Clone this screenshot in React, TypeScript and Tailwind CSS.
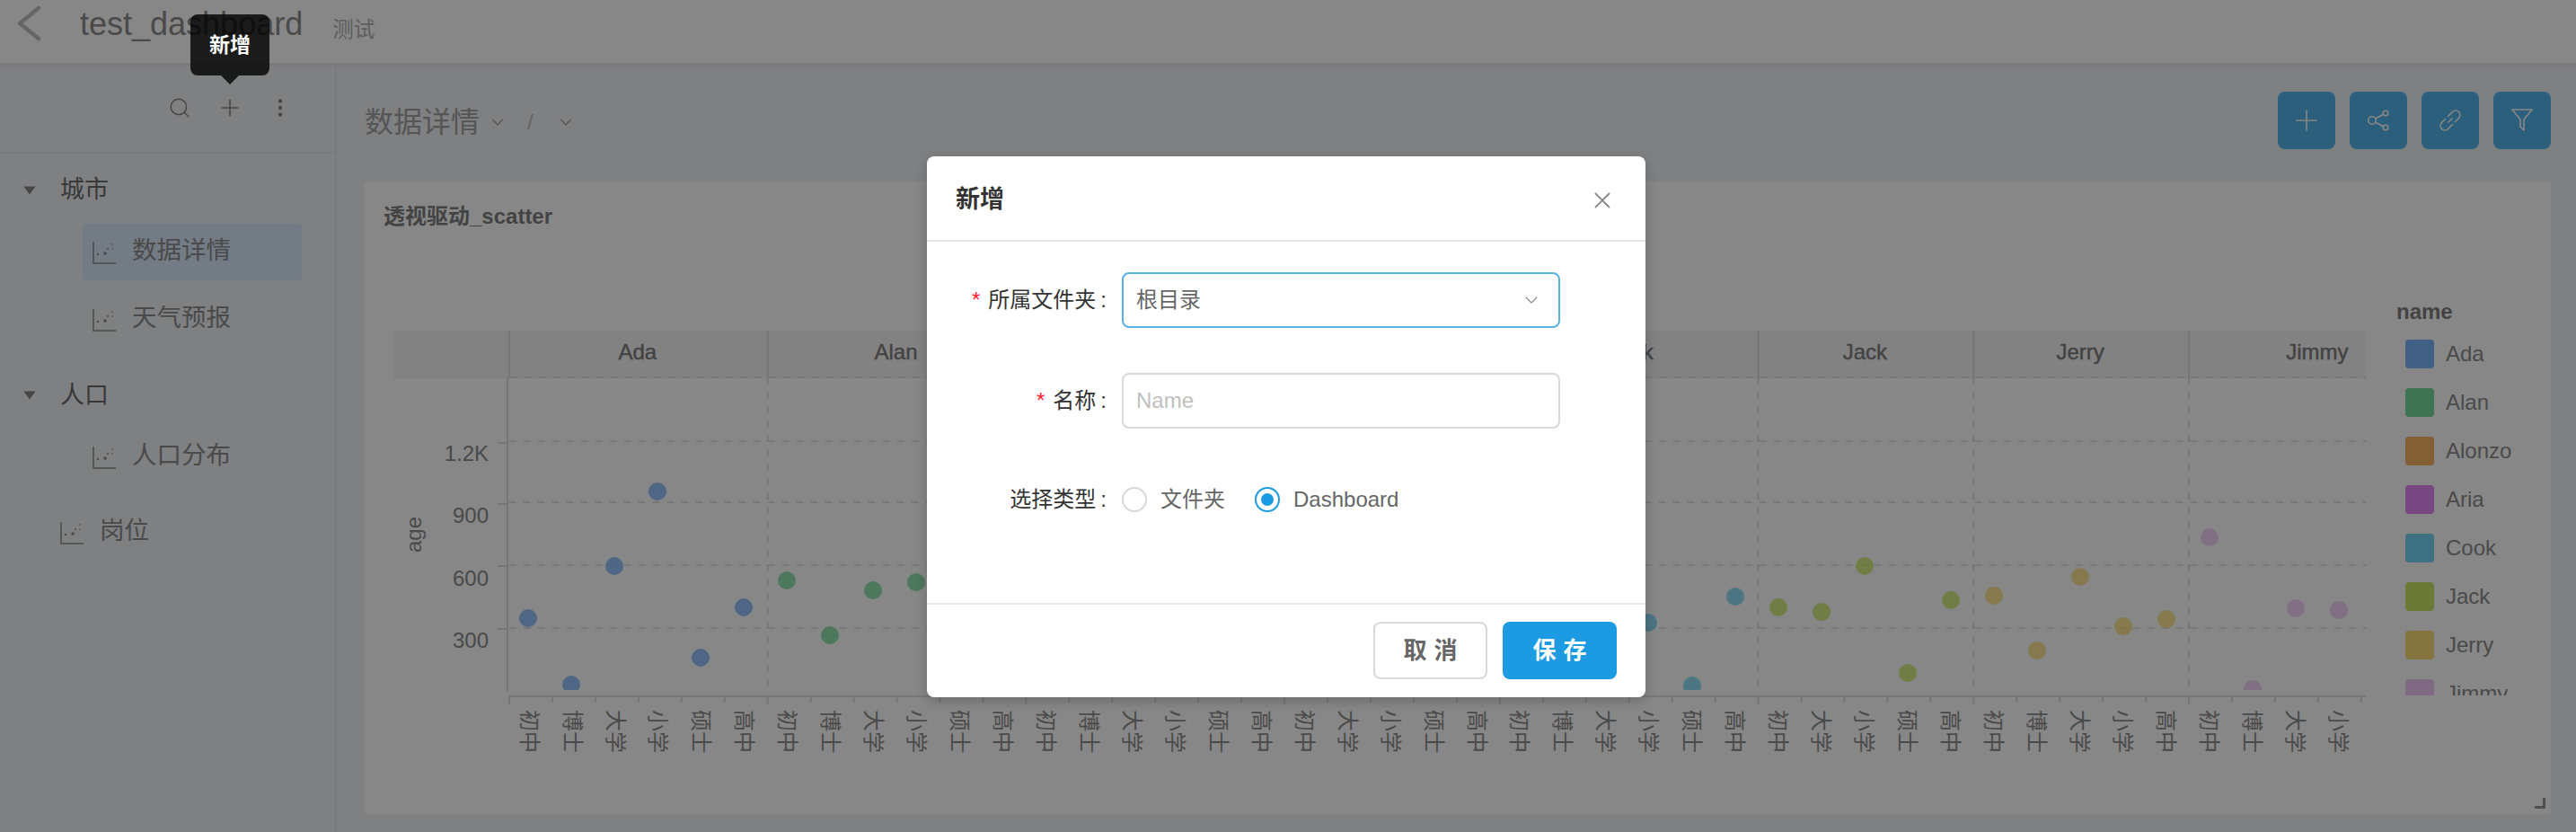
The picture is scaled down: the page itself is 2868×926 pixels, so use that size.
import { ChevronDown, MoreVertical, Plus, Search, X } from "lucide-react";

const facets = [
  { name: "Ada", color: "#5098f5", cats: ["初中", "博士", "大学", "小学", "硕士", "高中"] },
  { name: "Alan", color: "#4bd07a", cats: ["初中", "博士", "大学", "小学", "硕士", "高中"] },
  { name: "Alonzo", color: "#f89c30", cats: ["初中", "博士", "大学", "小学", "硕士", "高中"] },
  { name: "Aria", color: "#d660f2", cats: ["初中", "大学", "小学", "硕士", "高中"] },
  { name: "Cook", color: "#46c8f0", cats: ["初中", "博士", "大学", "小学", "硕士", "高中"] },
  { name: "Jack", color: "#b8df32", cats: ["初中", "大学", "小学", "硕士", "高中"] },
  { name: "Jerry", color: "#f8d24b", cats: ["初中", "博士", "大学", "小学", "高中"] },
  { name: "Jimmy", color: "#edb4f5", cats: ["初中", "博士", "大学", "小学", "硕士", "高中"] },
];

const BAR = 47.95;
const X0 = 567;
const RIGHT = 2634;

const dots: [number, number, number][] = [
  [0, 588, 688], [0, 636, 762], [0, 684, 630], [0, 732, 547], [0, 780, 732], [0, 828, 676],
  [1, 876, 646], [1, 924, 707], [1, 972, 657], [1, 1020, 648],
  [4, 1835, 693], [4, 1884, 763], [4, 1932, 664],
  [5, 1980, 676], [5, 2028, 681], [5, 2076, 630], [5, 2124, 749], [5, 2172, 668],
  [6, 2220, 663], [6, 2268, 724], [6, 2316, 642], [6, 2364, 697], [6, 2412, 689],
  [7, 2460, 598], [7, 2508, 767], [7, 2556, 677], [7, 2604, 679],
];

function ScatterIcon() {
  return (
    <svg width="26" height="26" viewBox="0 0 26 26" fill="none" className="shrink-0">
      <path d="M1 1V25H26" stroke="#666" strokeWidth="1.5" />
      <circle cx="6" cy="15" r="1.2" fill="#666" />
      <circle cx="14" cy="14" r="1.8" fill="#666" />
      <circle cx="17" cy="9" r="1" fill="#666" />
      <circle cx="22" cy="4" r="0.8" fill="#666" />
      <circle cx="22" cy="9" r="0.8" fill="#666" />
    </svg>
  );
}

function Caret() {
  return (
    <svg width="14" height="10" viewBox="0 0 14 10" className="shrink-0">
      <path d="M0.5 0.5H13.5L7 9.5Z" fill="#5c5c5c" />
    </svg>
  );
}

function Chart() {
  let x = X0;
  const layout = facets.map((f) => {
    const start = x;
    x += f.cats.length * BAR;
    return { ...f, start };
  });
  const grid = [420, 491, 559, 629, 699];
  const yLabels = [
    ["1.2K", 507, 493],
    ["900", 576, 561],
    ["600", 646, 630],
    ["300", 715, 700],
  ] as const;

  return (
    <svg width="2230" height="500" viewBox="406 360 2230 500" className="shrink-0 mt-[28px]">
      <defs>
        <clipPath id="plot">
          <rect x="406" y="420" width="2228" height="348" />
        </clipPath>
        <clipPath id="axis">
          <rect x="406" y="360" width="2228" height="500" />
        </clipPath>
      </defs>
      <rect x="438" y="368" width={RIGHT - 438} height="53" fill="#f3f3f3" />
      <text x="463" y="595" textAnchor="middle" dominantBaseline="middle" transform="rotate(-90 463 595)" fill="#666" fontSize="24">
        age
      </text>
      {grid.map((y) => (
        <line key={y} x1="567" x2={RIGHT} y1={y} y2={y} stroke="#d4d4d4" strokeWidth="2" strokeDasharray="8 8" />
      ))}
      {yLabels.map(([label, y, tick]) => (
        <g key={label}>
          <line x1="554" x2="565" y1={tick} y2={tick} stroke="#d4d4d4" strokeWidth="2" />
          <text x="544" y={y} textAnchor="end" dominantBaseline="middle" fill="#666" fontSize="24">
            {label}
          </text>
        </g>
      ))}
      <line x1="565" x2="565" y1="420" y2="770" stroke="#d4d4d4" strokeWidth="2" />
      <line x1="566" x2={RIGHT} y1="775" y2="775" stroke="#d4d4d4" strokeWidth="2" />
      <g clipPath="url(#axis)">
        {layout.map((f) => (
          <g key={f.name}>
            <line x1={f.start} x2={f.start} y1="368" y2="420" stroke="#d4d4d4" strokeWidth="2" />
            {f.name !== "Ada" && (
              <line x1={f.start} x2={f.start} y1="420" y2="770" stroke="#d4d4d4" strokeWidth="2" strokeDasharray="8 8" />
            )}
            <text x={f.start + (f.cats.length * BAR) / 2 - 1} y="394" textAnchor="middle" dominantBaseline="middle" fill="#555" fontSize="24" stroke="#555" strokeWidth="0.5">
              {f.name}
            </text>
            {f.cats.map((c, i) => {
              const cx = f.start + i * BAR;
              return (
                <g key={i}>
                  <line x1={cx} x2={cx} y1="775" y2={i === 0 ? 784 : 782} stroke="#d4d4d4" strokeWidth="2" />
                  <text transform={`translate(${cx + BAR / 2 - 4} 790) rotate(90)`} dominantBaseline="middle" fill="#666" fontSize="24">
                    {c}
                  </text>
                </g>
              );
            })}
          </g>
        ))}
      </g>
      <g clipPath="url(#plot)">
        {dots.map(([f, cx, cy], i) => (
          <circle key={i} cx={cx} cy={cy} r="10" fill={facets[f].color} fillOpacity="0.8" />
        ))}
      </g>
    </svg>
  );
}

function Legend() {
  return (
    <div className="ml-[32px] flex flex-col">
      <div className="h-[46px] text-[24px] leading-[30px] font-bold text-[#555]">name</div>
      <div className="h-[396px] overflow-hidden pl-[10px] flex flex-col gap-[22px]">
        {facets.map((f) => (
          <div key={f.name} className="flex items-center gap-[13px] h-[32px] shrink-0 text-[24px] text-[#666]">
            <span className="w-[32px] h-[32px] rounded-[4px]" style={{ backgroundColor: f.color }} />
            {f.name}
          </div>
        ))}
      </div>
    </div>
  );
}

function TreeLeaf({ label, active, indent }: { label: string; active?: boolean; indent: string }) {
  return (
    <div className={`h-[63px] rounded-[4px] flex items-center gap-[18px] text-[27.5px] text-[#666] ${indent} ${active ? "bg-[#cde1f7]" : ""}`}>
      <ScatterIcon />
      <span className="mb-[3px]">{label}</span>
    </div>
  );
}

function ToolButton({ children }: { children: React.ReactNode }) {
  return <div className="w-[64px] h-[64px] rounded-[8px] bg-[#1c9be3] flex items-center justify-center">{children}</div>;
}

export default function App() {
  return (
    <div className="relative w-[2868px] h-[926px] overflow-hidden bg-[#ebedf2] font-['Liberation_Sans','Noto_Sans_CJK_SC',sans-serif]">
      {/* Header */}
      <div className="h-[70px] bg-white flex items-center shadow-[0_2px_6px_rgba(0,0,0,0.1)] relative">
        <svg width="44" height="52" viewBox="0 0 44 52" fill="none" className="ml-[10px] mb-[18px]">
          <path d="M33 9L12 26L33 43" stroke="#aaa" strokeWidth="4.5" strokeLinecap="round" strokeLinejoin="round" />
        </svg>
        <span className="ml-[35px] mb-[16px] text-[36px] text-[#666]">test_dashboard</span>
        <span className="ml-[33px] mt-[-2px] text-[23.5px] text-[#999]">测试</span>
      </div>

      <div className="flex h-[856px]">
        {/* Sidebar */}
        <div className="w-[375px] shrink-0 border-r-2 border-[#dfe1e6]">
          <div className="h-[101px] border-b-2 border-[#dfe1e6] flex items-center justify-end pr-[48px] gap-[30px] text-[#575757]">
            <Search size={26} strokeWidth={1.3} />
            <Plus size={30} strokeWidth={1.2} className="-mx-[2px]" />
            <MoreVertical size={26} strokeWidth={2} />
          </div>
          <div className="pt-[9px] text-[27px]">
            <div className="h-[63px] flex items-center pl-[26px] gap-[15px] text-[#3a3a3a]">
              <Caret />
              <span className="ml-[12px]">城市</span>
            </div>
            <div className="mt-[6px] ml-[92px] w-[244px]">
              <TreeLeaf label="数据详情" active indent="pl-[11px]" />
              <div className="mt-[12px]">
                <TreeLeaf label="天气预报" indent="pl-[11px]" />
              </div>
            </div>
            <div className="mt-[21px] h-[63px] flex items-center pl-[26px] gap-[15px] text-[#3a3a3a]">
              <Caret />
              <span className="ml-[12px] mt-[2px]">人口</span>
            </div>
            <div className="mt-[6px] ml-[92px] w-[244px]">
              <TreeLeaf label="人口分布" indent="pl-[11px]" />
            </div>
            <div className="mt-[21px] ml-[67px]">
              <TreeLeaf label="岗位" indent="" />
            </div>
          </div>
        </div>

        {/* Main */}
        <div className="flex-1 pl-[31px] pr-[28px] flex flex-col">
          <div className="h-[132px] flex items-center text-[#828282]">
            <span className="text-[32px]">数据详情</span>
            <ChevronDown size={22} strokeWidth={1.5} className="ml-[9px]" />
            <span className="ml-[22px] text-[24px] text-[#aaa]">/</span>
            <ChevronDown size={22} strokeWidth={1.5} className="ml-[25px]" />
            <div className="ml-auto flex gap-[16px] mt-[-4px]">
              <ToolButton>
                <Plus size={38} strokeWidth={1} color="#fff" />
              </ToolButton>
              <ToolButton>
                <svg width="26" height="26" viewBox="0 0 26 26" fill="none" stroke="#fff" strokeWidth="1.6">
                  <circle cx="6" cy="13" r="4.2" />
                  <circle cx="21" cy="5" r="2.8" />
                  <circle cx="21" cy="21" r="2.8" />
                  <path d="M9.7 11L18.5 6.3M9.7 15L18.5 19.7" />
                </svg>
              </ToolButton>
              <ToolButton>
                <svg width="26" height="26" viewBox="0 0 26 26" fill="none" stroke="#fff" strokeWidth="1.6" strokeLinecap="round">
                  <path d="M10.5 8.5L15.5 3.5C17.5 1.5 20.5 1.5 22.5 3.5C24.5 5.5 24.5 8.5 22.5 10.5L18.5 14.5" />
                  <path d="M7.5 11.5L3.5 15.5C1.5 17.5 1.5 20.5 3.5 22.5C5.5 24.5 8.5 24.5 10.5 22.5L15.5 17.5" />
                  <path d="M11 15L15 11" />
                </svg>
              </ToolButton>
              <ToolButton>
                <svg width="26" height="28" viewBox="0 0 26 28" fill="none" stroke="#fff" strokeWidth="1.6" strokeLinejoin="round">
                  <path d="M2 2H24L15 13V25L11 21V13Z" />
                </svg>
              </ToolButton>
            </div>
          </div>

          {/* Card */}
          <div className="relative h-[704px] bg-white rounded-[4px] flex flex-col">
            <div className="h-[130px] pl-[21px] pt-[24px] text-[24px] leading-[30px] font-bold text-[#555]">透视驱动_scatter</div>
            <div className="flex">
              <Chart />
              <Legend />
            </div>
            <svg width="12" height="12" viewBox="0 0 12 12" className="absolute right-[6px] bottom-[6px]">
              <path d="M0 9H9V0H12V12H0Z" fill="#777" />
            </svg>
          </div>
        </div>
      </div>

      {/* Mask */}
      <div className="absolute inset-0 bg-[rgba(55,55,55,0.6)]" />

      {/* Tooltip */}
      <div className="absolute left-[212px] top-[16px] w-[88px] h-[68px] rounded-[8px] bg-[rgba(0,0,0,0.8)] flex items-center justify-center text-[23px] font-bold text-white">
        新增
        <span className="absolute left-[34px] top-[68px] w-0 h-0 border-x-[10px] border-x-transparent border-t-[10px] border-t-[rgba(0,0,0,0.8)]" />
      </div>

      {/* Modal */}
      <div className="absolute left-[1032px] top-[174px] w-[800px] h-[602px] rounded-[8px] bg-white shadow-[0_4px_14px_rgba(0,0,0,0.2)] flex flex-col text-[24px]">
        <div className="h-[95px] shrink-0 border-b-2 border-[#e8e8e8] flex items-center justify-between pl-[32px] pr-[33px] pt-[4px]">
          <span className="text-[27px] font-bold text-[#333]">新增</span>
          <X size={30} strokeWidth={1.5} color="#888" />
        </div>

        <div className="flex-1 pt-[34px] flex flex-col">
          <div className="flex items-center h-[62px]">
            <label className="w-[217px] pr-[17px] text-right text-[#333]">
              <span className="text-[#f5222d] mr-[9px]">*</span>所属文件夹<span className="ml-[5px]">:</span>
            </label>
            <div className="w-[488px] h-[62px] rounded-[8px] border-2 border-[#58b2e8] flex items-center justify-between pl-[14px] pr-[18px] text-[#666]">
              根目录
              <ChevronDown size={24} strokeWidth={1.1} color="#888" />
            </div>
          </div>
          <div className="flex items-center h-[62px] mt-[50px]">
            <label className="w-[217px] pr-[17px] text-right text-[#333]">
              <span className="text-[#f5222d] mr-[9px]">*</span>名称<span className="ml-[5px]">:</span>
            </label>
            <input placeholder="Name" className="w-[488px] h-[62px] rounded-[8px] border-2 border-[#d9d9d9] pl-[14px] outline-none placeholder:text-[#bfbfbf]" />
          </div>
          <div className="flex items-center h-[28px] mt-[65px]">
            <label className="w-[217px] pr-[17px] text-right text-[#333]">
              选择类型<span className="ml-[5px]">:</span>
            </label>
            <span className="w-[28px] h-[28px] rounded-full border-2 border-[#d9d9d9]" />
            <span className="ml-[15px] text-[#666]">文件夹</span>
            <span className="ml-[33px] w-[28px] h-[28px] rounded-full border-2 border-[#1c9be3] flex items-center justify-center">
              <span className="w-[14px] h-[14px] rounded-full bg-[#1c9be3]" />
            </span>
            <span className="ml-[15px] text-[#666]">Dashboard</span>
          </div>
        </div>

        <div className="h-[105px] shrink-0 border-t-2 border-[#e8e8e8] flex justify-end gap-[17px] pt-[19px] pr-[32px]">
          <button className="w-[127px] h-[64px] rounded-[8px] border-2 border-[#d9d9d9] text-[26px] font-bold text-[#666] tracking-[8px] pl-[8px]">取消</button>
          <button className="w-[127px] h-[64px] rounded-[8px] bg-[#1c9be3] text-[26px] font-bold text-white tracking-[8px] pl-[8px]">保存</button>
        </div>
      </div>
    </div>
  );
}
